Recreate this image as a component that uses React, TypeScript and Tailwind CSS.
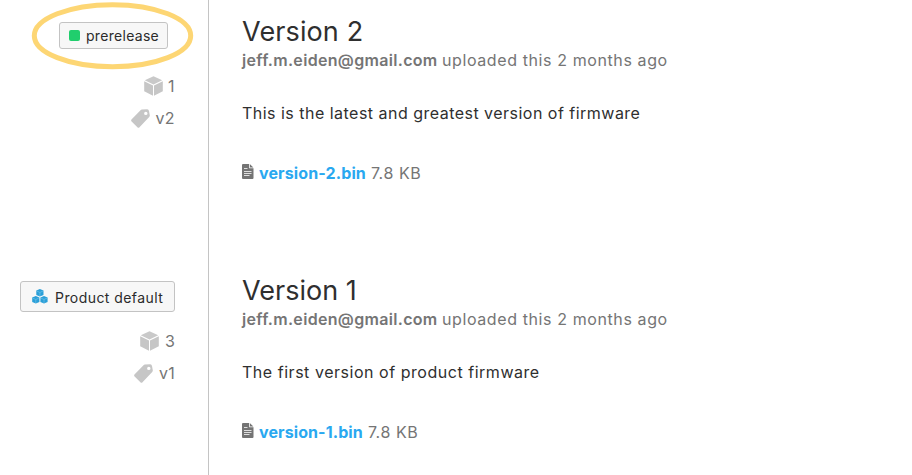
import type { ReactNode } from "react";

function CubeIcon() {
  return (
    <svg width="19" height="20" viewBox="0 0 19 20" className="block shrink-0">
      <path d="M9.5 0.2 18.2 4.3 9.5 8.6 0.8 4.3Z" fill="#c9c9c9" />
      <path d="M0.2 5.3 9 9.6V19.8L0.2 15.2Z" fill="#c6c6c6" />
      <path d="M18.8 5.3 10 9.6V19.8L18.8 15.2Z" fill="#c6c6c6" />
    </svg>
  );
}

function TagIcon() {
  return (
    <svg width="19" height="19" viewBox="0 0 19 19" className="block shrink-0">
      <path
        fillRule="evenodd"
        fill="#c6c6c6"
        d="M10.9 0.6 16.2 0.3Q17.7 0.4 18 1.9L18.8 6.2Q18.9 7.2 18.2 8L8.5 18.2Q7.5 19.2 6.4 18.2L0.6 12.4Q-0.4 11.3 0.7 10.3L9.5 1.3Q10.1 0.7 10.9 0.6ZM14.8 2.7a1.7 1.7 0 1 0 0 3.4a1.7 1.7 0 1 0 0-3.4Z"
      />
    </svg>
  );
}

function MiniCube({ x, y }: { x: number; y: number }) {
  return (
    <g transform={`translate(${x} ${y})`}>
      <path d="M3.8 0 7.4 1.6V6L3.8 7.6 0.2 6V1.6Z" fill="#2a9fd8" />
      <path d="M0.8 2.1 3.8 3.5 6.8 2.1M3.8 3.5V7" fill="none" stroke="#7cc7ea" strokeWidth="0.6" />
    </g>
  );
}

function CubesIcon() {
  return (
    <svg width="16" height="15" viewBox="0 0 16 15" className="block shrink-0">
      <MiniCube x={4.1} y={0} />
      <MiniCube x={0} y={7} />
      <MiniCube x={8.2} y={7} />
    </svg>
  );
}

function FileIcon() {
  return (
    <svg width="12" height="15" viewBox="0 0 12 15" className="mb-[3px] block shrink-0">
      <path d="M1 0H7.2V4.2H11.5V14Q11.5 15 10.5 15H1Q0 15 0 14V1Q0 0 1 0Z" fill="#747474" />
      <path d="M8 0.2 11.4 3.5H8Z" fill="#747474" />
      <path d="M2 4.5H5.5M2 7.5H9.5M2 9.5H9.5M2 11.5H7.5" stroke="#dedede" strokeWidth="1" />
    </svg>
  );
}

type ReleaseProps = {
  badge: ReactNode;
  metaGap: string;
  devices: ReactNode;
  tag: ReactNode;
  title: ReactNode;
  notes: ReactNode;
  file: ReactNode;
};

function Release({ badge, metaGap, devices, tag, title, notes, file }: ReleaseProps) {
  return (
    <section className="flex h-[259px] shrink-0">
      <aside className="flex w-[209px] shrink-0 flex-col items-end border-r border-[#c4c4c4] pr-[33px]">
        {badge}
        <div className={`flex h-5 items-center text-[16px] text-[#757575] ${metaGap}`}>
          <CubeIcon />
          {devices}
        </div>
        <div className="mt-[12px] flex h-5 items-center text-[16px] text-[#757575]">
          <TagIcon />
          {tag}
        </div>
      </aside>
      <article className="pl-[33px] pt-[15px] text-[16px] whitespace-nowrap">
        <h2 className="h-[33px] text-[27px] leading-[34px] text-[#2f2f2f]">{title}</h2>
        <p className="flex h-6 gap-[5px] leading-6 text-[#757575]">
          <strong className="w-[195px] font-semibold tracking-[0.32px]">jeff.m.eiden@gmail.com</strong>
          <span className="tracking-[0.6px]">uploaded this 2 months ago</span>
        </p>
        <p className="mt-[29px] h-6 leading-6 text-[#2f2f2f]">{notes}</p>
        <p className="mt-9 flex h-6 items-center leading-6">
          <FileIcon />
          {file}
        </p>
      </article>
    </section>
  );
}

export default function App() {
  return (
    <main className="relative flex h-[475px] w-[912px] flex-col overflow-hidden bg-white font-['Inter',sans-serif]">
      <Release
        badge={
          <div className="mt-[22px] mr-[7px] flex h-[27px] w-[109px] items-center rounded-[3px] border border-[#c3c3c3] bg-[#f7f7f7] pl-[9px] text-[14px] text-[#2b2b2b]">
            <span className="mr-[6px] size-[11px] rounded-[2px] bg-[#20ce6d]" />
            <span className="pb-px tracking-[0.3px]">prerelease</span>
          </div>
        }
        metaGap="mt-[27px]"
        devices={<span className="w-3 pb-px pl-[5px]">1</span>}
        tag={<span className="pb-px pl-[5px] tracking-[0.4px]">v2</span>}
        title={<span className="tracking-[0.12px]">Version 2</span>}
        notes={<span className="tracking-[0.48px]">This is the latest and greatest version of firmware</span>}
        file={
          <>
            <a className="ml-[5px] w-[107px] font-bold tracking-[0.12px] text-[#29a8f0]">version-2.bin</a>
            <span className="ml-[5px] tracking-[0.55px] text-[#757575]">7.8 KB</span>
          </>
        }
      />
      <Release
        badge={
          <div className="mt-[22px] flex h-[31px] w-[155px] items-center rounded-[3px] border border-[#c3c3c3] bg-[#f7f7f7] pl-[11px] text-[14px] text-[#2b2b2b]">
            <CubesIcon />
            <span className="ml-[7px] pt-px tracking-[0.44px]">Product default</span>
          </div>
        }
        metaGap="mt-[19px]"
        devices={<span className="pb-px pl-[6px]">3</span>}
        tag={<span className="pb-px pl-[6px] tracking-[0.2px]">v1</span>}
        title={<span>Version 1</span>}
        notes={<span className="tracking-[0.53px]">The first version of product firmware</span>}
        file={
          <>
            <a className="ml-[5px] w-[104px] font-bold tracking-[0.1px] text-[#29a8f0]">version-1.bin</a>
            <span className="ml-[5px] tracking-[0.55px] text-[#757575]">7.8 KB</span>
          </>
        }
      />
      <svg width="164" height="70" viewBox="0 0 164 70" className="pointer-events-none absolute top-0 left-[31px]">
        <ellipse cx="81.5" cy="35.7" rx="78.2" ry="31" fill="none" stroke="#fdd674" strokeWidth="5" />
      </svg>
    </main>
  );
}
